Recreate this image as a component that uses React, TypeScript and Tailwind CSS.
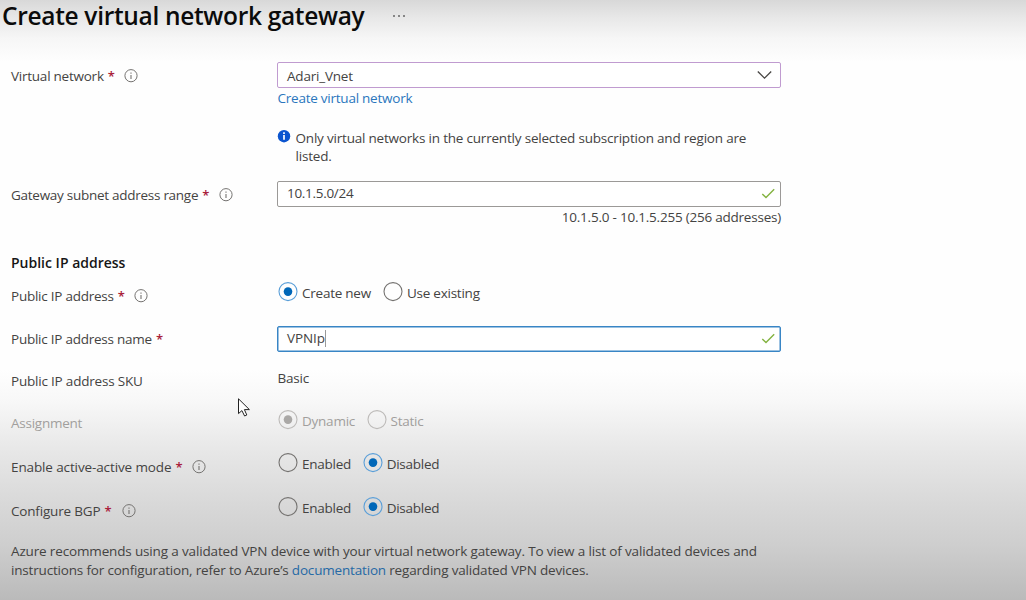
import React from "react";

function InfoIcon() {
  return (
    <svg width="14" height="14" viewBox="0 0 14 14" fill="none" className="shrink-0">
      <circle cx="7" cy="6.7" r="6.1" stroke="#757371" strokeWidth="1" />
      <path d="M7 5.9V9.9M7 3.6V4.8" stroke="#757371" strokeWidth="1.1" />
    </svg>
  );
}

function Label({ text, className, required, info, gap = "ml-[9.5px]", tracking = "tracking-[-0.24px]" }: { text: string; className: string; required?: boolean; info?: boolean; gap?: string; tracking?: string }) {
  return (
    <div className={`flex h-[18px] w-[266px] shrink-0 items-center self-start ${tracking} ${className}`}>
      <span>{text}</span>
      {required && <span className="-mt-px ml-[4px] w-[7px] text-[13px] font-semibold text-[#a9203a]">*</span>}
      {info && <span className={gap}><InfoIcon /></span>}
    </div>
  );
}

function Check() {
  return (
    <svg width="14" height="12" viewBox="0 0 14 12" fill="none">
      <path d="M1.3 6L5 9.6L13.2 1.3" stroke="#84b341" strokeWidth="1.4" />
    </svg>
  );
}

function Radio({ text, checked, disabled, className = "" }: { text: string; checked?: boolean; disabled?: boolean; className?: string }) {
  const ring = disabled ? "#bdbbb9" : checked ? "#5b9fd8" : "#757371";
  return (
    <div className={`flex h-[20px] items-center tracking-[-0.24px] ${className}`}>
      <svg width="21" height="20" viewBox="0 0 21 20" className="shrink-0">
        <circle cx="11" cy="9.6" r="9" fill="none" stroke={ring} strokeWidth="1.1" />
        {checked && <circle cx="11" cy="9.6" r="4.3" fill={disabled ? "#aaa8a6" : "#0067b8"} />}
      </svg>
      <span className={`ml-[4px] mt-px ${disabled ? "text-[#a19f9d]" : ""}`}>{text}</span>
    </div>
  );
}

export default function App() {
  return (
    <div className="relative h-[600px] w-[1026px] overflow-hidden bg-[linear-gradient(to_bottom,#d8d8d8_0px,#e8e8e8_18px,#f6f6f6_38px,#fefefe_62px,#fefefe_370px,#f8f8f8_400px,#e9e9e9_445px,#d8d8d8_505px,#cecece_545px,#bababa_600px)] pl-[11px] font-['Open_Sans','Noto_Sans',sans-serif] text-[13.5px] leading-[18px] tracking-[-0.2px] text-[#444342]">
      <header className="-ml-[9px] flex h-[62px] items-start">
        <h1 className="text-[24.5px] leading-[31px] font-semibold tracking-[-0.32px] text-[#0b0b0b]">Create virtual network gateway</h1>
        <div className="mt-[15px] ml-[29px] flex gap-[3px]">
          <i className="size-[2px] rounded-full bg-[#666]" />
          <i className="size-[2px] rounded-full bg-[#666]" />
          <i className="size-[2px] rounded-full bg-[#666]" />
        </div>
      </header>

      <div className="flex h-[119px]">
        <Label text="Virtual network" className="mt-[5px]" required info />
        <div className="w-[504px]">
          <div className="flex h-[26px] items-center justify-between rounded-[2px] border border-[#c09bd0] bg-white pr-[8px] pl-[9px]">
            <span className="mt-px">Adari_Vnet</span>
            <svg width="16" height="10" viewBox="0 0 16 10" fill="none"><path d="M1.8 1.5L8.5 8.2L15.2 1.5" stroke="#484644" strokeWidth="1.3" /></svg>
          </div>
          <a className="mt-px ml-[0.5px] block tracking-[-0.24px] text-[#2a76bd]">Create virtual network</a>
          <div className="mt-[22px] flex">
            <svg width="14" height="14" viewBox="0 0 14 14" className="shrink-0"><circle cx="7" cy="7.2" r="6.2" fill="#0c55cf" /><path d="M7 6.1V10.7M7 3.3V5.1" stroke="#fff" strokeWidth="1.7" /></svg>
            <p className="ml-[4.5px] whitespace-nowrap">Only virtual networks in the currently selected subscription and region are<br />listed.</p>
          </div>
        </div>
      </div>

      <div className="flex h-[73px]">
        <Label text="Gateway subnet address range" className="mt-[5px]" required info tracking="tracking-[-0.27px]" />
        <div className="w-[504px]">
          <div className="flex h-[26px] items-center justify-between rounded-[2px] border border-[#9b9997] bg-white pr-[5px] pl-[9px]">
            <span className="-mt-[2px] tracking-[-0.3px]">10.1.5.0/24</span>
            <Check />
          </div>
          <div className="mt-px text-right tracking-[-0.22px]">10.1.5.0 - 10.1.5.255 (256 addresses)</div>
        </div>
      </div>

      <h2 className="h-[28px] text-[14px] font-semibold tracking-[0px] text-[#161616]">Public IP address</h2>

      <div className="flex h-[44px]">
        <Label text="Public IP address" className="mt-[5px]" required info />
        <Radio text="Create new" checked />
        <Radio text="Use existing" className="ml-[11px]" />
      </div>

      <div className="flex h-[45px]">
        <Label text="Public IP address name" className="mt-[4px]" required />
        <div className="flex h-[26px] w-[504px] items-center justify-between rounded-[2px] border border-[#3885c5] bg-white pr-[5px] pl-[9px] shadow-[inset_0_0_0_0.5px_#3885c5]">
          <span className="-mt-px border-r border-[#999] leading-[17px] tracking-[-0.1px]">VPNIp</span>
          <Check />
        </div>
      </div>

      <div className="flex h-[39px]">
        <Label text="Public IP address SKU" className="mt-px" tracking="tracking-[-0.2px]" />
        <span className="-mt-[2px] ml-[0.5px]">Basic</span>
      </div>

      <div className="flex h-[43px]">
        <Label text="Assignment" className="mt-[4px] text-[#a19f9d]" />
        <Radio text="Dynamic" checked disabled />
        <Radio text="Static" disabled className="ml-[10.5px]" />
      </div>

      <div className="flex h-[44px]">
        <Label text="Enable active-active mode" className="mt-[5px]" required info tracking="tracking-[-0.12px]" />
        <Radio text="Enabled" />
        <Radio text="Disabled" checked className="ml-[10.5px]" />
      </div>

      <div className="flex h-[44px]">
        <Label text="Configure BGP" className="mt-[5px]" required info gap="ml-[10.5px]" tracking="tracking-[-0.18px]" />
        <Radio text="Enabled" />
        <Radio text="Disabled" checked className="ml-[10.5px]" />
      </div>

      <p className="mt-px leading-[18.5px] tracking-[-0.15px] whitespace-nowrap">
        Azure recommends using a validated VPN device with your virtual network gateway. To view a list of validated devices and<br />
        <span className="tracking-[-0.18px]">instructions for configuration, refer to Azure’s <a className="text-[#2569a5]">documentation</a> regarding validated VPN devices.</span>
      </p>

      <svg width="14" height="20" viewBox="0 0 14 20" className="absolute top-[398px] left-[237px]">
        <path d="M1.5 0.8V15.6L4.9 12.6L7.6 18L9.8 17L7.4 11.6H12.4Z" fill="#fff" stroke="#222" strokeWidth="1" />
      </svg>
    </div>
  );
}
